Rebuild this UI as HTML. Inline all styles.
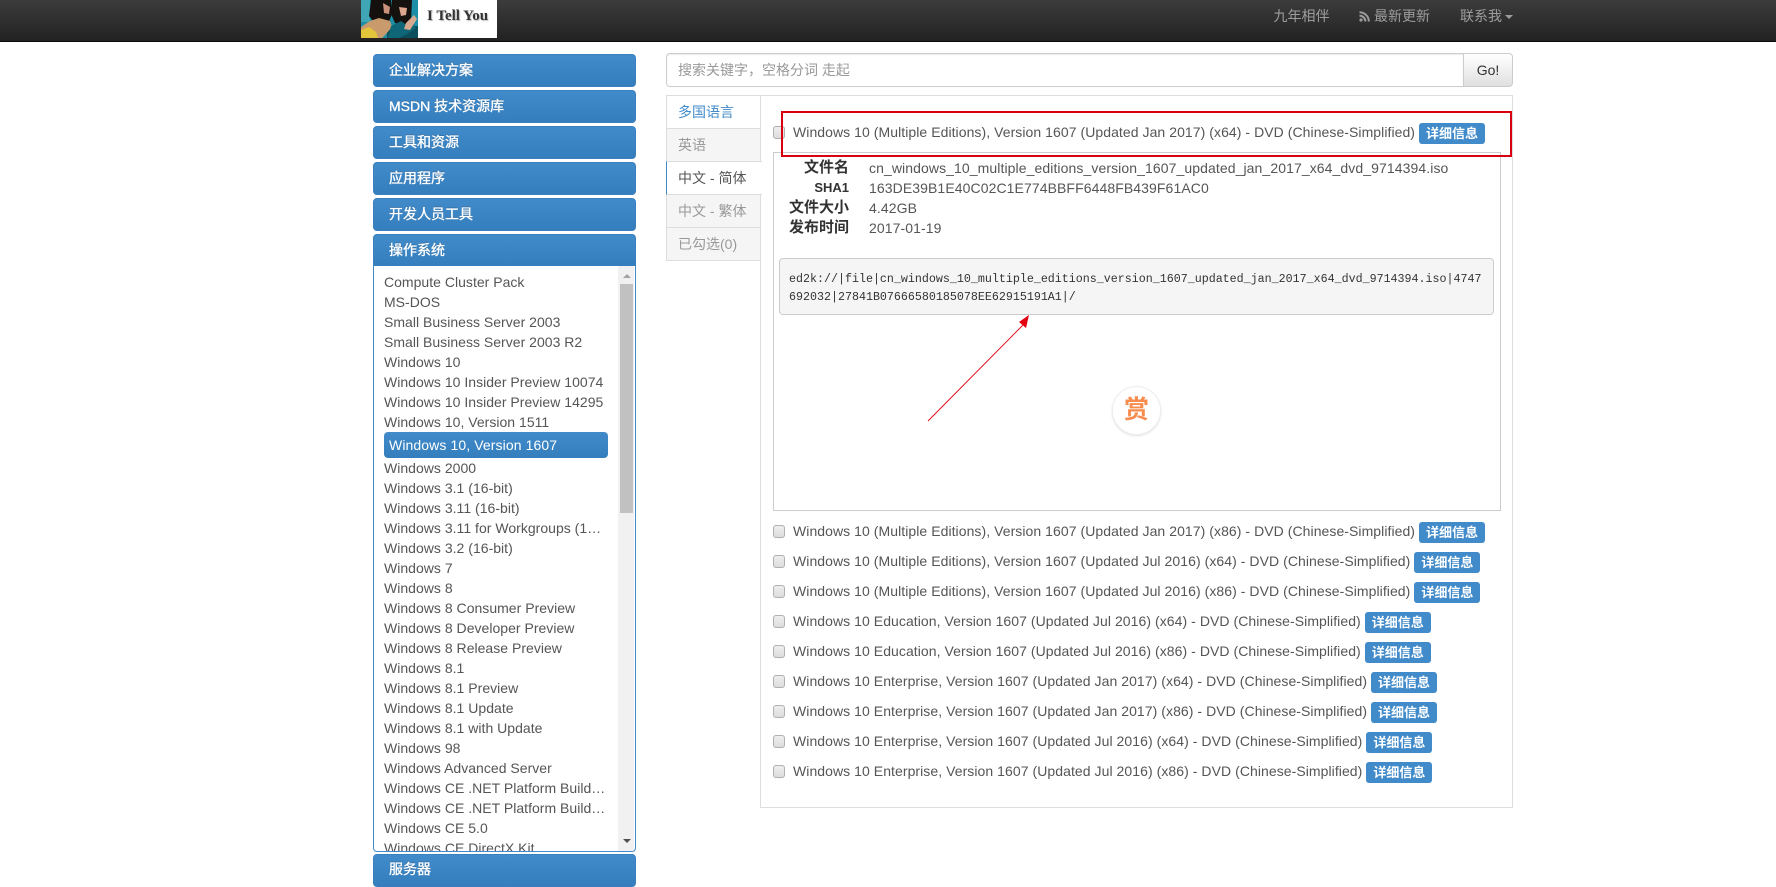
<!DOCTYPE html>
<html lang="zh-CN">
<head>
<meta charset="utf-8">
<title>I Tell You</title>
<style>
html,body{margin:0;padding:0;background:#fff}
body{width:1776px;height:877px;overflow:hidden;position:relative;font:14px/20px "Liberation Sans","Noto Sans CJK SC",sans-serif;color:#555}
div,span{box-sizing:border-box}
.a{position:absolute}
#nav{left:0;top:0;width:1776px;height:42px;background:linear-gradient(#3c3c3c,#222);border-bottom:1px solid #080808}
.nv{position:absolute;top:6px;color:#9d9d9d;white-space:nowrap}
.h{position:absolute;left:373px;width:263px;height:33px;border-radius:4px;background:linear-gradient(#428bca,#357ebd);border:1px solid #3a80bf;color:#fff;line-height:31px;padding-left:15px;-webkit-text-stroke:.35px #fff;text-shadow:0 -1px 0 rgba(0,0,0,.2);white-space:nowrap}
#lst{left:373px;top:266px;width:263px;height:586px;border:1px solid #428bca;border-top:0;border-radius:0 0 4px 4px;overflow:hidden;background:#fff}
.i{position:absolute;left:10px;width:222px;height:20px;line-height:20px;color:#555;white-space:nowrap;overflow:hidden;text-overflow:ellipsis;letter-spacing:.02px}
.tab{position:absolute;left:666px;width:95px;height:34px;padding-left:11px;line-height:32px;border:1px solid #ddd;background:#f5f5f5;color:#999;white-space:nowrap}
.r{position:absolute;left:773px;height:21px;white-space:nowrap;line-height:20px;color:#555;letter-spacing:.06px}
.c{display:inline-block;width:12px;height:13px;border:1px solid #b0b0b0;border-radius:3px;background:linear-gradient(#eee,#ddd);vertical-align:-2px;margin-right:8px}
.l{display:inline-block;height:21px;width:66px;margin-left:4px;background:#428bca;border-radius:3px;color:#fff;font-weight:bold;font-size:13px;line-height:21px;text-align:center;vertical-align:-1px;letter-spacing:0}
.k{position:absolute;left:773px;width:76px;text-align:right;font-weight:bold;font-size:15px;color:#333;white-space:nowrap}
.v{position:absolute;left:869px;color:#555;white-space:nowrap;letter-spacing:.09px}
</style>
</head>
<body>
<div id="nav" class="a">
  <div class="a" style="left:361px;top:0;width:136px;height:38px;background:#fff;overflow:hidden">
    <svg width="57" height="38" viewBox="0 0 57 38" style="position:absolute;left:0;top:0">
      <rect width="57" height="38" fill="#1c8fa6"/>
      <rect x="0" y="0" width="9" height="22" fill="#3fa6b6"/>
      <rect x="26" y="26" width="31" height="12" fill="#0c4f5c"/>
      <path d="M10 0H30L31 14L27 24L15 25L8 16Z" fill="#14100e"/>
      <path d="M31 0H51L50 20L43 25L34 23L30 14Z" fill="#15110f"/>
      <path d="M22 3L29 7L28 14L23 13Z" fill="#c9917a"/>
      <path d="M38 7L46 8L45 15L40 16Z" fill="#dca68c"/>
      <path d="M0 38V27L9 21L18 18L29 21L31 27L25 34L21 38Z" fill="#c99a6c"/>
      <path d="M0 38V30L8 27L15 32L17 38Z" fill="#e3c53c"/>
      <path d="M30 26L40 21L47 26L51 22L55 28L46 34L38 38L27 38Z" fill="#0e6676"/>
      <path d="M45 23L53 15L56 19L49 30L43 29Z" fill="#d7a98e"/>
    </svg>
    <span class="a" style="left:66px;top:6px;font:bold 15px/20px 'Liberation Serif',serif;color:#333;white-space:nowrap;text-shadow:1px 1px 1px #bbb">I Tell You</span>
  </div>
  <span class="nv" style="left:1273.5px">九年相伴</span>
  <svg class="a" style="left:1359px;top:11px" width="11" height="11" viewBox="0 0 11 11"><circle cx="2" cy="9" r="1.6" fill="#9d9d9d"/><path d="M0.5 4.6A6 6 0 0 1 6.4 10.5M0.5 1.2A9.3 9.3 0 0 1 9.8 10.5" fill="none" stroke="#9d9d9d" stroke-width="2"/></svg>
  <span class="nv" style="left:1374px">最新更新</span>
  <span class="nv" style="left:1460px">联系我</span>
  <span class="a" style="left:1505px;top:15px;width:0;height:0;border:4px solid transparent;border-top-color:#9d9d9d;border-bottom:0"></span>
</div>

<div class="h" style="top:54px">企业解决方案</div>
<div class="h" style="top:90px">MSDN 技术资源库</div>
<div class="h" style="top:126px">工具和资源</div>
<div class="h" style="top:162px">应用程序</div>
<div class="h" style="top:198px">开发人员工具</div>
<div class="h" style="top:234px;border-radius:4px 4px 0 0">操作系统</div>
<div id="lst" class="a">
  <div class="i" style="top:6px">Compute Cluster Pack</div>
  <div class="i" style="top:26px">MS-DOS</div>
  <div class="i" style="top:46px">Small Business Server 2003</div>
  <div class="i" style="top:66px">Small Business Server 2003 R2</div>
  <div class="i" style="top:86px">Windows 10</div>
  <div class="i" style="top:106px">Windows 10 Insider Preview 10074</div>
  <div class="i" style="top:126px">Windows 10 Insider Preview 14295</div>
  <div class="i" style="top:146px">Windows 10, Version 1511</div>
  <div class="a" style="left:10px;top:166px;width:224px;height:26px;border-radius:4px;background:linear-gradient(#428bca,#357ebd);color:#fff;line-height:26px;padding-left:5px;white-space:nowrap;letter-spacing:.1px">Windows 10, Version 1607</div>
  <div class="i" style="top:192px">Windows 2000</div>
  <div class="i" style="top:212px">Windows 3.1 (16-bit)</div>
  <div class="i" style="top:232px">Windows 3.11 (16-bit)</div>
  <div class="i" style="top:252px;width:224px">Windows 3.11 for Workgroups (16-bit)</div>
  <div class="i" style="top:272px">Windows 3.2 (16-bit)</div>
  <div class="i" style="top:292px">Windows 7</div>
  <div class="i" style="top:312px">Windows 8</div>
  <div class="i" style="top:332px">Windows 8 Consumer Preview</div>
  <div class="i" style="top:352px">Windows 8 Developer Preview</div>
  <div class="i" style="top:372px">Windows 8 Release Preview</div>
  <div class="i" style="top:392px">Windows 8.1</div>
  <div class="i" style="top:412px">Windows 8.1 Preview</div>
  <div class="i" style="top:432px">Windows 8.1 Update</div>
  <div class="i" style="top:452px">Windows 8.1 with Update</div>
  <div class="i" style="top:472px">Windows 98</div>
  <div class="i" style="top:492px">Windows Advanced Server</div>
  <div class="i" style="top:512px">Windows CE .NET Platform Builder 4.2</div>
  <div class="i" style="top:532px">Windows CE .NET Platform Builder 5.0</div>
  <div class="i" style="top:552px">Windows CE 5.0</div>
  <div class="i" style="top:572px">Windows CE DirectX Kit</div>
  <div class="a" style="left:244px;top:0;width:16px;height:586px;background:#f1f1f1"></div>
  <div class="a" style="left:246px;top:18px;width:13px;height:229px;background:#c1c1c1"></div>
  <span class="a" style="left:249px;top:8px;width:0;height:0;border:4px solid transparent;border-bottom-color:#a3a3a3;border-top:0"></span>
  <span class="a" style="left:249px;top:573px;width:0;height:0;border:4px solid transparent;border-top-color:#505050;border-bottom:0"></span>
</div>
<div class="h" style="top:854px;line-height:29px">服务器</div>

<div class="a" style="left:666px;top:53px;width:798px;height:34px;border:1px solid #ccc;border-radius:4px 0 0 4px;color:#999;line-height:32px;padding-left:11px;box-shadow:inset 0 1px 1px rgba(0,0,0,.075);white-space:nowrap">搜索关键字，空格分词 走起</div>
<div class="a" style="left:1463px;top:53px;width:50px;height:34px;border:1px solid #ccc;border-radius:0 4px 4px 0;background:linear-gradient(#fff,#e0e0e0);color:#333;line-height:32px;text-align:center">Go!</div>

<div class="a" style="left:760px;top:95px;width:753px;height:713px;border:1px solid #ddd"></div>
<div class="tab" style="top:95px;background:#fff;color:#428bca">多国语言</div>
<div class="tab" style="top:128px">英语</div>
<div class="tab" style="top:161px;background:#fff;color:#555;border-right:0;border-left-color:#428bca;width:96px;z-index:2">中文 - 简体</div>
<div class="tab" style="top:194px">中文 - 繁体</div>
<div class="tab" style="top:227px">已勾选(0)</div>

<div class="r" style="top:122px"><span class="c"></span>Windows 10 (Multiple Editions), Version 1607 (Updated Jan 2017) (x64) - DVD (Chinese-Simplified)<span class="l">详细信息</span></div>

<div class="a" style="left:773px;top:152px;width:728px;height:359px;border:1px solid #ccc"></div>
<div class="k" style="top:158px">文件名</div><div class="v" style="top:158px">cn_windows_10_multiple_editions_version_1607_updated_jan_2017_x64_dvd_9714394.iso</div>
<div class="k" style="top:178px;font-size:13px">SHA1</div><div class="v" style="top:178px">163DE39B1E40C02C1E774BBFF6448FB439F61AC0</div>
<div class="k" style="top:198px">文件大小</div><div class="v" style="top:198px">4.42GB</div>
<div class="k" style="top:218px">发布时间</div><div class="v" style="top:218px">2017-01-19</div>
<div class="a" style="left:779px;top:258px;width:715px;height:57px;background:#f5f5f5;border:1px solid #ccc;border-radius:4px;padding:11px 9px;font:11.67px/18px 'Liberation Mono',monospace;color:#333;white-space:pre">ed2k://|file|cn_windows_10_multiple_editions_version_1607_updated_jan_2017_x64_dvd_9714394.iso|4747
692032|27841B07666580185078EE62915191A1|/</div>

<svg class="a" style="left:0;top:0;z-index:3;pointer-events:none" width="1776" height="877">
  <rect x="782" y="112" width="729" height="44" fill="none" stroke="#d9000f" stroke-width="2"/>
  <path d="M928 421L1025 323" fill="none" stroke="#e0101a" stroke-width="1"/>
  <path d="M1029 315L1026 328L1019 322Z" fill="#e3000f"/>
</svg>

<div class="a" style="left:1112px;top:386px;width:49px;height:49px;border-radius:50%;background:#fff;border:1px solid #eee;box-shadow:0 1px 2px rgba(0,0,0,.12);color:#f78c4c;font-size:25px;font-weight:bold;line-height:47px;text-align:center">赏</div>

<div class="r" style="top:521px"><span class="c"></span>Windows 10 (Multiple Editions), Version 1607 (Updated Jan 2017) (x86) - DVD (Chinese-Simplified)<span class="l">详细信息</span></div>
<div class="r" style="top:551px"><span class="c"></span>Windows 10 (Multiple Editions), Version 1607 (Updated Jul 2016) (x64) - DVD (Chinese-Simplified)<span class="l">详细信息</span></div>
<div class="r" style="top:581px"><span class="c"></span>Windows 10 (Multiple Editions), Version 1607 (Updated Jul 2016) (x86) - DVD (Chinese-Simplified)<span class="l">详细信息</span></div>
<div class="r" style="top:611px"><span class="c"></span>Windows 10 Education, Version 1607 (Updated Jul 2016) (x64) - DVD (Chinese-Simplified)<span class="l">详细信息</span></div>
<div class="r" style="top:641px"><span class="c"></span>Windows 10 Education, Version 1607 (Updated Jul 2016) (x86) - DVD (Chinese-Simplified)<span class="l">详细信息</span></div>
<div class="r" style="top:671px"><span class="c"></span>Windows 10 Enterprise, Version 1607 (Updated Jan 2017) (x64) - DVD (Chinese-Simplified)<span class="l">详细信息</span></div>
<div class="r" style="top:701px"><span class="c"></span>Windows 10 Enterprise, Version 1607 (Updated Jan 2017) (x86) - DVD (Chinese-Simplified)<span class="l">详细信息</span></div>
<div class="r" style="top:731px"><span class="c"></span>Windows 10 Enterprise, Version 1607 (Updated Jul 2016) (x64) - DVD (Chinese-Simplified)<span class="l">详细信息</span></div>
<div class="r" style="top:761px"><span class="c"></span>Windows 10 Enterprise, Version 1607 (Updated Jul 2016) (x86) - DVD (Chinese-Simplified)<span class="l">详细信息</span></div>
</body>
</html>
